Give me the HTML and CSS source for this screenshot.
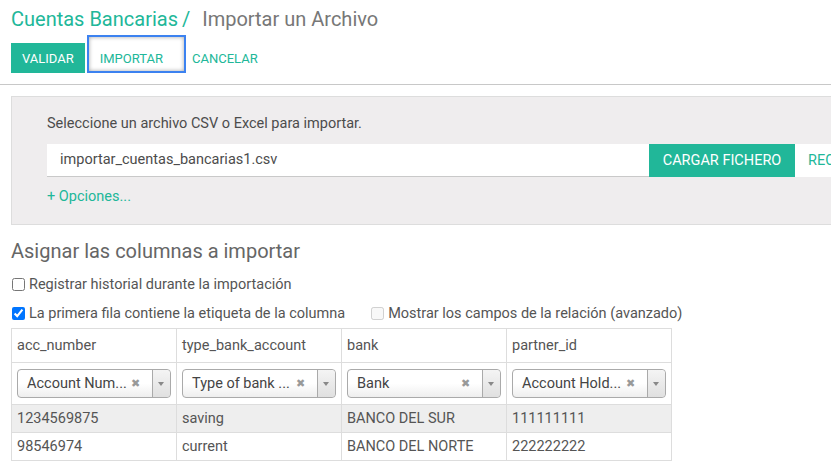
FILE: index.html
```html
<!DOCTYPE html>
<html lang="es">
<head>
    <meta charset="UTF-8">
    <title>Importar un Archivo</title>
    <link rel="stylesheet" href="styles.css">
</head>
<body>

<div class="control-panel">
    <div class="breadcrumb">
        <span class="crumb-link">Cuentas Bancarias</span>
        <span class="crumb-sep">/</span>
        <span class="crumb-active">Importar un Archivo</span>
    </div>
    <div class="buttons">
        <button class="btn btn-primary">VALIDAR</button>
        <button class="btn btn-link btn-focus">IMPORTAR</button>
        <button class="btn btn-link">CANCELAR</button>
    </div>
</div>

<div class="content">
    <!-- File chooser -->
    <div class="file-panel">
        <p class="file-help">Seleccione un archivo CSV o Excel para importar.</p>
        <div class="file-row">
            <div class="file-name">importar_cuentas_bancarias1.csv</div>
            <button class="btn btn-primary btn-load">CARGAR FICHERO</button>
            <button class="btn btn-reload">RECARGAR</button>
        </div>
        <a class="options-link">+ Opciones...</a>
    </div>

    <h2 class="section-title">Asignar las columnas a importar</h2>

    <div class="checks">
        <div class="check-row">
            <label class="check"><input type="checkbox"> Registrar historial durante la importación</label>
        </div>
        <div class="check-row">
            <label class="check"><input type="checkbox" checked> La primera fila contiene la etiqueta de la columna</label>
            <label class="check check-advanced"><input type="checkbox" disabled> Mostrar los campos de la relación (avanzado)</label>
        </div>
    </div>

    <!-- Column mapping preview -->
    <table class="preview">
        <tr class="head-row">
            <td>acc_number</td>
            <td>type_bank_account</td>
            <td>bank</td>
            <td>partner_id</td>
        </tr>
        <tr class="field-row">
            <td><div class="select"><span class="select-text">Account Num...</span><span class="select-clear">&#10006;</span><span class="select-arrow"></span></div></td>
            <td><div class="select"><span class="select-text">Type of bank ...</span><span class="select-clear">&#10006;</span><span class="select-arrow"></span></div></td>
            <td><div class="select"><span class="select-text">Bank</span><span class="select-clear">&#10006;</span><span class="select-arrow"></span></div></td>
            <td><div class="select"><span class="select-text">Account Hold...</span><span class="select-clear">&#10006;</span><span class="select-arrow"></span></div></td>
        </tr>
        <tr class="data-row odd">
            <td>1234569875</td>
            <td>saving</td>
            <td>BANCO DEL SUR</td>
            <td>111111111</td>
        </tr>
        <tr class="data-row">
            <td>98546974</td>
            <td>current</td>
            <td>BANCO DEL NORTE</td>
            <td>222222222</td>
        </tr>
    </table>
</div>

</body>
</html>
```

FILE: styles.css
```css
/* Colors */
:root {
    --primary: #21b799;
    --text: #4c4c4c;
    --muted: #777777;
    --panel-bg: #efedee;
    --border: #dddddd;
}

html, body {
    overflow: hidden;
}

body {
    margin: 0;
    font-family: Roboto, "Liberation Sans", sans-serif;
    font-size: 14.5px;
    color: var(--text);
    background-color: #ffffff;
}

/* Top control panel */
.control-panel {
    padding: 6px 11px 11px;
    border-bottom: 1px solid #c8c8c8;
}

.breadcrumb {
    font-size: 20px;
    line-height: 26px;
    height: 26px;
}

.crumb-link {
    color: var(--primary);
}

.crumb-sep {
    color: var(--primary);
    margin: 0 7px 0 -1px;
}

.crumb-active {
    color: var(--muted);
}

.buttons {
    display: flex;
    align-items: center;
    gap: 4px;
    margin-top: 11px;
}

.btn {
    font-family: inherit;
    font-size: 13px;
    border: none;
    background: none;
    padding: 0 11px;
    height: 30px;
    cursor: pointer;
}

.btn-primary {
    background-color: var(--primary);
    color: #ffffff;
}

.btn-link {
    color: var(--primary);
}

/* focus ring drawn over the button */
.btn-focus {
    position: relative;
    margin-right: 3px;
}

.btn-focus::after {
    content: "";
    position: absolute;
    left: -2px;
    top: -8px;
    width: 95px;
    height: 34px;
    border: 2px solid #3c82f0;
    box-shadow: inset 0 0 4px rgba(0, 0, 0, 0.35);
}

/* File panel */
.content {
    padding: 11px 0 0 11px;
}

.file-panel {
    width: 1000px;
    background-color: var(--panel-bg);
    border: 1px solid var(--border);
    padding: 17px 0 17px 35px;
}

.file-help {
    margin: 0;
    line-height: 20px;
}

.file-row {
    display: flex;
    margin-top: 10px;
    height: 33px;
}

.file-name {
    width: 589px;
    background-color: #ffffff;
    border-bottom: 1px solid #c9c9c9;
    padding-left: 13px;
    line-height: 32px;
}

.btn-load {
    height: 33px;
    width: 146px;
    font-size: 14.5px;
}

.btn-reload {
    height: 33px;
    background-color: #ffffff;
    color: var(--primary);
    font-size: 14.5px;
    padding: 0 13px;
}

.options-link {
    display: block;
    margin-top: 10px;
    line-height: 20px;
    color: var(--primary);
}

/* Mapping */
.section-title {
    font-size: 20px;
    font-weight: normal;
    color: #666666;
    margin: 13px 0 0;
    line-height: 26px;
}

.checks {
    margin-top: 6px;
}

.check-row {
    display: flex;
    height: 29px;
    align-items: center;
}

.check {
    display: flex;
    align-items: center;
    color: #555555;
}

.check input {
    margin: 0 4px 0 1px;
    width: 13px;
    height: 13px;
}

.check-advanced {
    margin-left: 25px;
}

.preview {
    border-collapse: collapse;
}

.preview td {
    border: 1px solid var(--border);
    width: 154px;
    padding: 0 5px;
    color: #555555;
}

.head-row td {
    height: 33px;
}

.field-row td {
    height: 41px;
}

.data-row td {
    height: 27px;
}

.data-row.odd td {
    background-color: #eeeeee;
}

.select {
    display: flex;
    align-items: center;
    height: 27px;
    border: 1px solid #aaaaaa;
    border-radius: 4px;
    background: linear-gradient(#ffffff 50%, #eeeeee);
    color: #444444;
}

.select-text {
    flex: 1;
    padding-left: 9px;
    white-space: nowrap;
}

.select-clear {
    font-size: 11px;
    color: #999999;
    margin-right: 12px;
}

.select-arrow {
    width: 17px;
    height: 27px;
    border-left: 1px solid #aaaaaa;
    background: linear-gradient(#f4f4f4, #e0e0e0);
    border-radius: 0 4px 4px 0;
    position: relative;
}

.select-arrow::after {
    content: "";
    position: absolute;
    left: 5px;
    top: 12px;
    border-left: 3px solid transparent;
    border-right: 3px solid transparent;
    border-top: 4px solid #888888;
}
```
